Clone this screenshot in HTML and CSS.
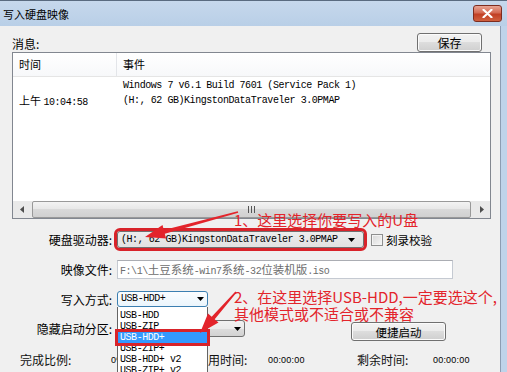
FILE: index.html
```html
<!DOCTYPE html>
<html lang="zh-CN">
<head>
    <meta charset="UTF-8">
    <meta name="viewport" content="width=device-width, initial-scale=1.0">
    <title>写入硬盘映像</title>
    <link rel="stylesheet" href="styles.css">
</head>
<body>
    <div class="window">
        <div class="titlebar">
            <span class="title">写入硬盘映像</span>
            <span class="close-btn">
                <svg width="11" height="9" viewBox="0 0 11 9"><path d="M1.5 0.8 L9.5 8.2 M9.5 0.8 L1.5 8.2" stroke="#fff" stroke-width="2.2" stroke-linecap="round"/></svg>
            </span>
        </div>
        <div class="frame">
            <div class="client">
                <div class="msg-head">
                    <span class="msg-label">消息:</span>
                    <button class="btn btn-save">保存</button>
                </div>

                <div class="listview">
                    <div class="lv-header">
                        <div class="col-time">时间</div>
                        <div class="col-event">事件</div>
                    </div>
                    <div class="lv-body">
                        <div class="lv-row">
                            <div class="col-time"></div>
                            <div class="col-event mono">Windows 7 v6.1 Build 7601 (Service Pack 1)</div>
                        </div>
                        <div class="lv-row">
                            <div class="col-time">上午 <span class="mono">10:04:58</span></div>
                            <div class="col-event mono">(H:, 62 GB)KingstonDataTraveler 3.0PMAP</div>
                        </div>
                    </div>
                    <div class="hscroll">
                        <div class="sb-arrow">
                            <svg width="4" height="7" viewBox="0 0 4 7"><polygon points="4,0 4,7 0,3.5" fill="#4d4d4d"/></svg>
                        </div>
                        <div class="sb-track">
                            <div class="sb-thumb"><span class="grip"></span></div>
                        </div>
                        <div class="sb-arrow">
                            <svg width="4" height="7" viewBox="0 0 4 7"><polygon points="0,0 0,7 4,3.5" fill="#4d4d4d"/></svg>
                        </div>
                    </div>
                </div>

                <div class="form">
                    <div class="form-row row-drive">
                        <span class="field-label">硬盘驱动器:</span>
                        <div class="combo combo-drive marked">
                            <span class="combo-text mono">(H:, 62 GB)KingstonDataTraveler 3.0PMAP</span>
                            <svg class="combo-arrow" width="7" height="4" viewBox="0 0 7 4"><polygon points="0,0 7,0 3.5,4" fill="#000"/></svg>
                        </div>
                        <span class="checkbox"></span>
                        <span class="check-label">刻录校验</span>
                    </div>

                    <div class="form-row row-image">
                        <span class="field-label">映像文件:</span>
                        <div class="textbox mono">F:\1\<span class="cjk">土豆系统</span>-win7<span class="cjk">系统</span>-32<span class="cjk">位装机版</span>.iso</div>
                    </div>

                    <div class="form-row row-mode">
                        <span class="field-label">写入方式:</span>
                        <div class="combo-wrap">
                            <div class="combo combo-mode">
                                <span class="combo-text mono">USB-HDD+</span>
                                <svg class="combo-arrow" width="7" height="4" viewBox="0 0 7 4"><polygon points="0,0 7,0 3.5,4" fill="#000"/></svg>
                            </div>
                            <ul class="dropdown mono">
                                <li>USB-HDD</li>
                                <li>USB-ZIP</li>
                                <li class="selected marked">USB-HDD+</li>
                                <li>USB-ZIP+</li>
                                <li>USB-HDD+ v2</li>
                                <li>USB-ZIP+ v2</li>
                            </ul>
                        </div>
                    </div>

                    <div class="form-row row-hidden">
                        <span class="field-label">隐藏启动分区:</span>
                        <div class="combo combo-hidden">
                            <span class="combo-text mono">No</span>
                            <svg class="combo-arrow" width="7" height="4" viewBox="0 0 7 4"><polygon points="0,0 7,0 3.5,4" fill="#000"/></svg>
                        </div>
                        <button class="btn btn-quick">便捷启动</button>
                    </div>

                    <div class="status-row">
                        <span class="status-label">完成比例:</span>
                        <span class="status-val">0%</span>
                        <span class="status-label">已用时间:</span>
                        <span class="status-val">00:00:00</span>
                        <span class="status-label">剩余时间:</span>
                        <span class="status-val">00:00:00</span>
                    </div>
                </div>
            </div>
            <div class="frame-edge"></div>
        </div>

        <!-- red annotations drawn over the dialog -->
        <div class="note note-1">1、这里选择你要写入的U盘</div>
        <div class="note note-2">2、在这里选择USB-HDD,一定要选这个,<br>其他模式或不适合或不兼容</div>
        <svg class="note-arrows" width="507" height="372" viewBox="0 0 507 372">
            <polygon points="237.8,211.3 163.8,229.9 162.5,225 145,237 166.1,238.6 164.8,233.7 238.2,212.7" fill="#e3242b"/>
            <polygon points="235.4,291.5 211.7,316.7 208,313.4 200,333 218.5,322.6 214.7,319.3 236.6,292.5" fill="#e3242b"/>
        </svg>
    </div>
</body>
</html>
```

FILE: styles.css
```css
body {
    margin: 0;
    font-family: "Noto Sans CJK SC", "Liberation Sans", sans-serif;
    font-size: 12px;
    color: #000;
    background: #f0f0f0;
    overflow: hidden;
}
.window {
    position: relative;
    width: 507px;
    height: 372px;
    display: flex;
    flex-direction: column;
    overflow: hidden;
}
.titlebar {
    height: 25px;
    flex: none;
    border-top: 1px solid #5a6b80;
    background: linear-gradient(#c6d8ec, #b9cfe7);
    display: flex;
    align-items: center;
    justify-content: space-between;
    padding: 0 5px 0 3px;
}
.title {
    font-size: 11px;
    color: #000;
}
.close-btn {
    width: 27px;
    height: 15px;
    border: 1px solid #7d2c1f;
    border-radius: 3px;
    background: linear-gradient(#e8a595, #d46a53 45%, #c13f24 55%, #d0603f);
    display: flex;
    align-items: center;
    justify-content: center;
}
.frame {
    flex: 1;
    display: flex;
    background: #bfd3ea;
}
.frame-edge {
    width: 6px;
}
.client {
    flex: 1;
    background: #f0f0f0;
    border-right: 1px solid #8d9db3;
    padding: 7px 9px 0 12px;
    display: flex;
    flex-direction: column;
}
.msg-head {
    height: 19px;
    display: flex;
    justify-content: space-between;
    align-items: flex-end;
    margin-right: 9px;
}
.msg-label {
    line-height: 16px;
}
.btn {
    box-sizing: border-box;
    font-family: "Noto Sans CJK SC", sans-serif;
    font-size: 12px;
    color: #000;
    border: 1px solid #707070;
    border-radius: 3px;
    background: linear-gradient(#f2f2f2, #ebebeb 50%, #dddddd 50%, #cfcfcf);
    box-shadow: inset 0 0 0 1px #fbfbfb;
    padding: 0;
    line-height: 14px;
}
.btn-save {
    width: 65px;
    height: 19px;
    align-self: flex-start;
}
.mono {
    font-family: "Liberation Mono", "Noto Sans CJK SC", monospace;
    font-size: 10px;
    letter-spacing: -0.45px;
}
.mono .cjk {
    font-family: "Noto Sans CJK SC", sans-serif;
    font-size: 11.5px;
    letter-spacing: 0;
}

/* list view */
.listview {
    box-sizing: border-box;
    height: 167px;
    border: 1px solid #828790;
    background: #fff;
    display: flex;
    flex-direction: column;
}
.lv-header {
    height: 23px;
    display: flex;
    border-bottom: 1px solid #e5e5e5;
    background: linear-gradient(#ffffff, #f7f8fa);
    font-size: 11px;
    line-height: 23px;
}
.lv-header .col-time {
    border-right: 1px solid #e3e5e9;
}
.col-time {
    box-sizing: border-box;
    width: 104px;
    padding-left: 6px;
    font-size: 11px;
}
.col-event {
    padding-left: 6px;
    white-space: nowrap;
}
.lv-header .col-event {
    font-size: 11px;
}
.lv-body {
    flex: 1;
    padding-top: 1px;
}
.lv-row {
    display: flex;
    height: 15px;
    line-height: 15px;
}
.hscroll {
    height: 17px;
    display: flex;
    background: #e9e9e9;
}
.sb-arrow {
    width: 17px;
    display: flex;
    align-items: center;
    justify-content: center;
}
.sb-track {
    flex: 1;
    padding: 0 2px;
    display: flex;
}
.sb-thumb {
    flex: 1;
    box-sizing: border-box;
    border: 1px solid #999;
    border-radius: 2px;
    background: linear-gradient(#f3f3f3, #e7e7e7 50%, #d9d9d9 50%, #d0d0d0);
    display: flex;
    align-items: center;
    justify-content: center;
}
.grip {
    width: 7px;
    height: 7px;
    background: repeating-linear-gradient(90deg, #555 0 1px, transparent 1px 3px);
}

/* form */
.form {
    display: flex;
    flex-direction: column;
}
.form-row {
    display: flex;
    align-items: center;
}
.field-label {
    width: 100px;
    margin-right: 5px;
    text-align: right;
    font-size: 12px;
    white-space: nowrap;
}
.combo {
    box-sizing: border-box;
    display: flex;
    align-items: center;
    border: 1px solid #707070;
    border-radius: 3px;
    background: linear-gradient(#f2f2f2, #ebebeb 50%, #dddddd 50%, #d2d2d2);
    padding-left: 3px;
    white-space: nowrap;
    overflow: hidden;
}
.combo-text {
    flex: 1;
    line-height: 14px;
}
.combo-arrow {
    flex: none;
    margin-right: 4px;
}
.marked {
    outline: 3px solid #d8232a;
}
.row-drive {
    margin-top: 12px;
    height: 17px;
}
.combo-drive {
    width: 247px;
    height: 17px;
    background: linear-gradient(#ececec, #e2e2e2);
}
.combo-drive .combo-arrow {
    margin-right: 8px;
}
.checkbox {
    box-sizing: border-box;
    width: 12px;
    height: 12px;
    margin-left: 7px;
    border: 1px solid #8e8f8f;
    background: linear-gradient(135deg, #d8d8d8, #f7f7f7);
    box-shadow: inset 0 0 0 1px #f4f4f4;
}
.check-label {
    margin-left: 3px;
    font-size: 11.5px;
}
.row-image {
    margin-top: 12px;
    height: 19px;
}
.textbox {
    box-sizing: border-box;
    width: 336px;
    height: 19px;
    border: 1px solid #c5cad2;
    border-top-color: #abadb3;
    background: #fff;
    color: #6d6d6d;
    padding-left: 2px;
    line-height: 17px;
    white-space: nowrap;
}
.row-mode {
    margin-top: 12px;
    height: 16px;
    position: relative;
    z-index: 2;
}
.combo-wrap {
    position: relative;
}
.combo-mode {
    width: 91px;
    height: 16px;
    border-color: #3c7fb1;
    background: linear-gradient(#fbfdff, #ebf5fc);
}
.combo-mode .combo-arrow {
    margin-right: 3px;
}
.dropdown {
    position: absolute;
    top: 100%;
    left: 0;
    box-sizing: border-box;
    width: 91px;
    height: 72px;
    margin: 0;
    padding: 3px 0 0;
    list-style: none;
    background: #fff;
    border: 1px solid #646464;
    border-top: none;
}
.dropdown li {
    height: 11px;
    line-height: 11px;
    padding-left: 2px;
    white-space: nowrap;
}
.dropdown li.selected {
    background: #3399ff;
    color: #fff;
}
.row-hidden {
    margin-top: 13px;
    height: 21px;
    align-items: flex-start;
}
.combo-hidden {
    width: 128px;
    height: 17px;
}
.combo-hidden .combo-arrow {
    margin-right: 3px;
}
.btn-quick {
    width: 95px;
    height: 19px;
    margin-top: 2px;
    margin-left: 106px;
    font-size: 11.5px;
}
.status-row {
    margin-top: 12px;
    height: 14px;
    padding-left: 8px;
    display: grid;
    grid-template-columns: 91px 85px 72px 89px 76px 1fr;
    align-items: center;
    line-height: 14px;
}
.status-label {
    font-size: 12px;
    color: #111;
    white-space: nowrap;
}
.status-val {
    font-family: "Liberation Sans", sans-serif;
    font-size: 9px;
    letter-spacing: 0.2px;
}

/* annotations */
.note {
    position: absolute;
    left: 234px;
    z-index: 5;
    color: #e3242b;
    font-size: 15px;
    line-height: 17px;
    white-space: nowrap;
}
.note-1 {
    top: 211px;
}
.note-2 {
    top: 288px;
}
.note-arrows {
    position: absolute;
    left: 0;
    top: 0;
    z-index: 6;
    pointer-events: none;
}
```
